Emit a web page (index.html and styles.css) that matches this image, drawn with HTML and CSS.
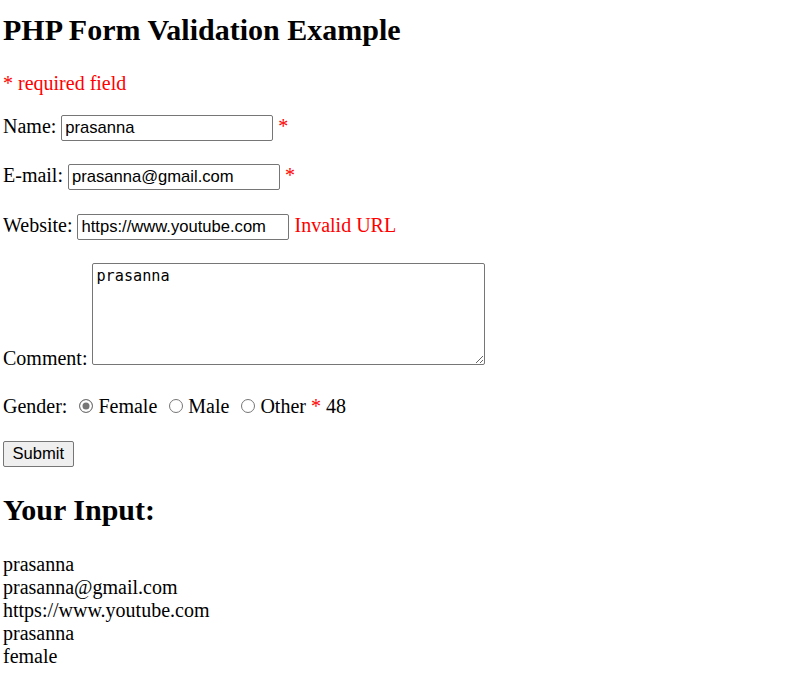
FILE: index.html
```html
<!DOCTYPE html>
<html>
<head>
<meta charset="utf-8">
<title>PHP Form Validation Example</title>
<link rel="stylesheet" href="styles.css">
</head>
<body>
<h2 class="title">PHP Form Validation Example</h2>
<p><span class="error">* required field</span></p>
<form class="form" action="#" method="post">
  Name: <input class="field" type="text" name="name" value="prasanna"> <span class="error">*</span>
  <br><br>
  E-mail: <input class="field" type="text" name="email" value="prasanna@gmail.com"> <span class="error">*</span>
  <br><br>
  Website: <input class="field" type="text" name="website" value="https://www.youtube.com"> <span class="error">Invalid URL</span>
  <br><br>
  Comment: <textarea class="comment" name="comment">prasanna</textarea>
  <br><br>
  Gender:
  <input class="radio" type="radio" name="gender" value="female" checked>Female
  <input class="radio" type="radio" name="gender" value="male">Male
  <input class="radio" type="radio" name="gender" value="other">Other
  <span class="error">*</span> 48
  <br><br>
  <input class="submit" type="submit" name="submit" value="Submit">
</form>
<h2 class="subtitle">Your Input:</h2>
prasanna<br>prasanna@gmail.com<br>https://www.youtube.com<br>prasanna<br>female<br>
</body>
</html>
```

FILE: styles.css
```css
html {
  background: #fff;
}
body {
  margin: 0 0 8px 3px;
  font-family: "Liberation Serif", "Times New Roman", serif;
  font-size: 20px;
  color: #000;
}
h2 {
  font-size: 30px;
  font-weight: bold;
  margin: 25px 0;
}
.title {
  margin-top: 13px;
}
p {
  margin: 20px 0;
}
.error {
  color: #ff0000;
}
.form {
  margin: 0;
}
.field {
  box-sizing: border-box;
  width: 212px;
  height: 26px;
  margin: 0 0 0.3px;
  padding: 2px 3px;
  border: 1px solid #767676;
  border-radius: 2px;
  font-family: "Liberation Sans", Arial, sans-serif;
  font-size: 16.6px;
  color: #000;
  background: #fff;
}
.comment {
  box-sizing: border-box;
  width: 393px;
  height: 102px;
  margin: 0;
  padding: 3px 3px;
  border: 1px solid #767676;
  border-radius: 2px;
  font-family: "DejaVu Sans Mono", "Liberation Mono", monospace;
  font-size: 15.2px;
  line-height: 1.2;
  color: #000;
  vertical-align: baseline;
  resize: both;
}
.radio {
  appearance: none;
  -webkit-appearance: none;
  box-sizing: border-box;
  width: 14px;
  height: 14px;
  margin: 6px 5px 0 7px;
  border: 1px solid #767676;
  border-radius: 50%;
  background: #fff;
  vertical-align: baseline;
}
.radio:checked {
  background: #767676;
  box-shadow: inset 0 0 0 2.5px #fff;
}
.submit {
  box-sizing: border-box;
  height: 26px;
  margin: 0;
  padding: 0 8.5px;
  border: 1px solid #767676;
  border-radius: 2px;
  background: #efefef;
  font-family: "Liberation Sans", Arial, sans-serif;
  font-size: 16.6px;
  color: #000;
}
.subtitle {
  margin-top: 26px;
  margin-bottom: 26px;
}
```
